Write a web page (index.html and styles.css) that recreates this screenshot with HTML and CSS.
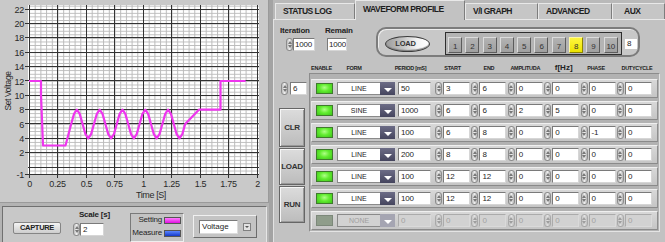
FILE: index.html
```
<!DOCTYPE html>
<html>
<head>
<meta charset="utf-8">
<link rel="stylesheet" href="styles.css">
</head>
<body>
<div class="app">
  <div class="left">
    <div class="graph">
      <svg class="plot" width="267" height="202" viewBox="0 0 267 202">
        <defs>
          <pattern id="minor" x="29" y="167" width="5.7" height="3.585" patternUnits="userSpaceOnUse">
            <path d="M0.5 0V3.585M0 0.5H5.7" stroke="#bababa" stroke-width="1" fill="none"/>
          </pattern>
        </defs>
        <rect x="28" y="5" width="231" height="170" fill="#ffffff"/>
        <rect x="29" y="5" width="230" height="170" fill="url(#minor)"/>
        <path stroke="#333333" stroke-width="1" fill="none" d="M29.5 5V175M57.5 5V175M86.5 5V175M114.5 5V175M143.5 5V175M171.5 5V175M200.5 5V175M228.5 5V175M257.5 5V175M28 9.5H259M28 23.5H259M28 37.5H259M28 52.5H259M28 66.5H259M28 80.5H259M28 95.5H259M28 109.5H259M28 123.5H259M28 138.5H259M28 152.5H259M28 167.5H259M28 174.5H259"/>
        <path stroke="#333333" stroke-width="1" fill="none" d="M25 9.5H29M25 23.5H29M25 37.5H29M25 52.5H29M25 66.5H29M25 80.5H29M25 95.5H29M25 109.5H29M25 123.5H29M25 138.5H29M25 152.5H29M25 174.5H29M29.5 175V178M57.5 175V178M86.5 175V178M114.5 175V178M143.5 175V178M171.5 175V178M200.5 175V178M228.5 175V178M257.5 175V178"/>
        <path stroke="#ee36ee" stroke-width="2.2" fill="none" stroke-linejoin="round" d="M29 81H41V95L43 145.5H65.5L71.18 124L74.03 113.86L76.88 109.64L79.73 113.86L82.58 124L85.43 134.14L88.28 138.32L91.13 134.14L93.98 124L96.83 113.86L99.68 109.64L102.53 113.86L105.38 124L108.23 134.14L111.08 138.32L113.93 134.14L116.78 124L119.63 113.86L122.48 109.64L125.33 113.86L128.18 124L131.03 134.14L133.88 138.32L136.73 134.14L139.58 124L142.43 113.86L145.28 109.64L148.13 113.86L150.98 124L153.83 134.14L156.68 138.32L159.53 134.14L162.38 124L165.23 113.86L168.08 109.64L170.93 113.86L173.78 124L176.63 134.14L179.48 138.32L182.33 134.14L185.18 124L198.9 109.64H220.5V81H245.6"/>
        <g class="ylab">
          <text x="24" y="12.8">22</text>
          <text x="24" y="27.1">20</text>
          <text x="24" y="41.4">18</text>
          <text x="24" y="55.8">16</text>
          <text x="24" y="70.1">14</text>
          <text x="24" y="84.5">12</text>
          <text x="24" y="98.8">10</text>
          <text x="24" y="113.1">8</text>
          <text x="24" y="127.5">6</text>
          <text x="24" y="141.8">4</text>
          <text x="24" y="156.2">2</text>
          <text x="24" y="177.7">-1</text>
        </g>
        <g class="xlab">
          <text x="29.5" y="187">0</text>
          <text x="57.5" y="187">0.25</text>
          <text x="86.5" y="187">0.5</text>
          <text x="114.5" y="187">0.75</text>
          <text x="143.5" y="187">1</text>
          <text x="171.5" y="187">1.25</text>
          <text x="200.5" y="187">1.5</text>
          <text x="228.5" y="187">1.75</text>
          <text x="257.5" y="187">2</text>
        </g>
        <text class="axt" x="151" y="197.5">Time [S]</text>
        <text class="axt vt" transform="translate(10.5 91) rotate(-90)">Set Voltage</text>
      </svg>
    </div>
    <div class="controls">
      <div class="capture">CAPTURE</div>
      <div class="scale">
        <div class="lbl right">Scale [s]</div>
        <div class="num"><i class="spin"></i><span class="box w24">2</span></div>
      </div>
      <div class="legend">
        <span class="ltxt">Setting</span><i class="sw mag"></i>
        <span class="ltxt">Measure</span><i class="sw blu"></i>
      </div>
      <div class="plotsel">
        <span class="field">Voltage</span>
        <i class="mini"></i>
      </div>
    </div>
  </div>
  <div class="divider"></div>
  <div class="right">
    <div class="tabs">
      <div class="tab tab-status">STATUS LOG</div>
      <div class="tab tab-wave on">WAVEFORM PROFILE</div>
      <div class="tab tab-vi">V/I GRAPH</div>
      <div class="tab tab-adv">ADVANCED</div>
      <div class="tab tab-aux">AUX</div>
    </div>
    <div class="body">
      <div class="toprow">
        <div class="iter">
          <div class="lbl">Iteration</div>
          <div class="num"><i class="spin"></i><span class="box w22">1000</span></div>
        </div>
        <div class="remain">
          <div class="lbl">Remain</div>
          <div class="num"><span class="box w20">1000</span></div>
        </div>
        <div class="loadgrp">
          <div class="oval">LOAD</div>
          <div class="nums">
            <div class="nb">1</div><div class="nb">2</div><div class="nb">3</div><div class="nb">4</div><div class="nb">5</div>
            <div class="nb">6</div><div class="nb">7</div><div class="nb sel">8</div><div class="nb">9</div><div class="nb">10</div>
          </div>
          <div class="ind">8</div>
        </div>
      </div>
      <div class="main">
        <div class="side">
          <div class="num"><i class="spin"></i><span class="box w17">6</span></div>
          <div class="sbtn first">CLR</div>
          <div class="sbtn">LOAD</div>
          <div class="sbtn">RUN</div>
        </div>
        <div class="table">
          <div class="hdr">
            <div class="h h-en">ENABLE</div>
            <div class="h h-form">FORM</div>
            <div class="h h-per">PERIOD [mS]</div>
            <div class="h h-pair h-first">START</div>
            <div class="h h-pair">END</div>
            <div class="h h-pair">AMPLITUDA</div>
            <div class="h h-pair h-f">f[Hz]</div>
            <div class="h h-pair h-ph">PHASE</div>
            <div class="h h-pair h-dc">DUTYCYCLE</div>
          </div>
          <div class="rows">
            <div class="row">
              <i class="led"></i>
              <div class="dd"><span class="ddv">LINE</span><i class="ddb"></i></div>
              <span class="box per">50</span>
              <div class="pair"><i class="spin"></i><span class="box">3</span></div>
              <div class="pair"><i class="spin"></i><span class="box">6</span></div>
              <div class="pair"><i class="spin"></i><span class="box">0</span></div>
              <div class="pair"><i class="spin"></i><span class="box">0</span></div>
              <div class="pair"><i class="spin"></i><span class="box">0</span></div>
              <div class="pair"><i class="spin"></i><span class="box">0</span></div>
            </div>
            <div class="row">
              <i class="led"></i>
              <div class="dd"><span class="ddv">SINE</span><i class="ddb"></i></div>
              <span class="box per">1000</span>
              <div class="pair"><i class="spin"></i><span class="box">6</span></div>
              <div class="pair"><i class="spin"></i><span class="box">6</span></div>
              <div class="pair"><i class="spin"></i><span class="box">2</span></div>
              <div class="pair"><i class="spin"></i><span class="box">5</span></div>
              <div class="pair"><i class="spin"></i><span class="box">0</span></div>
              <div class="pair"><i class="spin"></i><span class="box">0</span></div>
            </div>
            <div class="row">
              <i class="led"></i>
              <div class="dd"><span class="ddv">LINE</span><i class="ddb"></i></div>
              <span class="box per">100</span>
              <div class="pair"><i class="spin"></i><span class="box">6</span></div>
              <div class="pair"><i class="spin"></i><span class="box">8</span></div>
              <div class="pair"><i class="spin"></i><span class="box">0</span></div>
              <div class="pair"><i class="spin"></i><span class="box">0</span></div>
              <div class="pair"><i class="spin"></i><span class="box">-1</span></div>
              <div class="pair"><i class="spin"></i><span class="box">0</span></div>
            </div>
            <div class="row">
              <i class="led"></i>
              <div class="dd"><span class="ddv">LINE</span><i class="ddb"></i></div>
              <span class="box per">200</span>
              <div class="pair"><i class="spin"></i><span class="box">8</span></div>
              <div class="pair"><i class="spin"></i><span class="box">8</span></div>
              <div class="pair"><i class="spin"></i><span class="box">0</span></div>
              <div class="pair"><i class="spin"></i><span class="box">0</span></div>
              <div class="pair"><i class="spin"></i><span class="box">0</span></div>
              <div class="pair"><i class="spin"></i><span class="box">0</span></div>
            </div>
            <div class="row">
              <i class="led"></i>
              <div class="dd"><span class="ddv">LINE</span><i class="ddb"></i></div>
              <span class="box per">100</span>
              <div class="pair"><i class="spin"></i><span class="box">12</span></div>
              <div class="pair"><i class="spin"></i><span class="box">12</span></div>
              <div class="pair"><i class="spin"></i><span class="box">0</span></div>
              <div class="pair"><i class="spin"></i><span class="box">0</span></div>
              <div class="pair"><i class="spin"></i><span class="box">0</span></div>
              <div class="pair"><i class="spin"></i><span class="box">0</span></div>
            </div>
            <div class="row">
              <i class="led"></i>
              <div class="dd"><span class="ddv">LINE</span><i class="ddb"></i></div>
              <span class="box per">100</span>
              <div class="pair"><i class="spin"></i><span class="box">12</span></div>
              <div class="pair"><i class="spin"></i><span class="box">12</span></div>
              <div class="pair"><i class="spin"></i><span class="box">0</span></div>
              <div class="pair"><i class="spin"></i><span class="box">0</span></div>
              <div class="pair"><i class="spin"></i><span class="box">0</span></div>
              <div class="pair"><i class="spin"></i><span class="box">0</span></div>
            </div>
            <div class="row off">
              <i class="led"></i>
              <div class="dd"><span class="ddv">NONE</span><i class="ddb"></i></div>
              <span class="box per">0</span>
              <div class="pair"><i class="spin"></i><span class="box">0</span></div>
              <div class="pair"><i class="spin"></i><span class="box">0</span></div>
              <div class="pair"><i class="spin"></i><span class="box">0</span></div>
              <div class="pair"><i class="spin"></i><span class="box">0</span></div>
              <div class="pair"><i class="spin"></i><span class="box">0</span></div>
              <div class="pair"><i class="spin"></i><span class="box">0</span></div>
            </div>
          </div>
        </div>
      </div>
    </div>
  </div>
</div>
</body>
</html>
```
FILE: styles.css
```
* { box-sizing: border-box; margin: 0; padding: 0; }
html, body { width: 665px; height: 242px; overflow: hidden; }
body {
  background: #b7b7b7;
  font-family: "Liberation Sans", Arial, sans-serif;
  font-size: 8px;
  color: #262626;
}
i { display: block; font-style: normal; }
.app { display: flex; height: 242px; }

/* ---------- left side ---------- */
.left { width: 269px; display: flex; flex-direction: column; background: #b3b3b3; }
.graph { height: 203px; background: #c9c9c9; border-right: 1px solid #9a9a9a; border-bottom: 1px solid #9a9a9a; }
.plot { display: block; }
.ylab text { font-size: 9px; letter-spacing: -0.3px; text-anchor: end; fill: #2a2a2a; }
.xlab text { font-size: 9px; letter-spacing: -0.3px; text-anchor: middle; fill: #2a2a2a; }
.axt { font-size: 9px; letter-spacing: -0.4px; text-anchor: middle; fill: #2a2a2a; }
.axt.vt { font-size: 8.5px; letter-spacing: -0.4px; }

.controls {
  flex: 1;
  margin: 3px 2px 0;
  background: #c8c8c8;
  border-top: 1px solid #707070;
  border-left: 1px solid #707070;
  border-right: 1px solid #e6e6e6;
  display: flex;
  align-items: flex-start;
}
.capture {
  margin: 15px 0 0 10px;
  width: 48px; height: 12px;
  background: linear-gradient(#f4f4f4, #cdcdcd);
  border: 1px solid #858585;
  border-radius: 2px;
  font-weight: bold; font-size: 7.5px; letter-spacing: -0.3px; line-height: 10px;
  text-align: center; color: #222;
}
.scale { margin: 3px 0 0 11px; width: 38px; }
.lbl { font-weight: bold; font-size: 8px; letter-spacing: -0.2px; line-height: 10px; white-space: nowrap; color: #222; }
.lbl.right { text-align: right; }
.num { display: flex; }
.scale .num { margin-top: 3px; padding-left: 1px; }

.legend {
  margin: 6px 0 0 20px;
  width: 54px; height: 29px;
  border: 1px solid;
  border-color: #7a7a7a #eeeeee #eeeeee #7a7a7a;
  background: #c3c3c3;
  padding: 1px 2px 0 0;
  display: grid;
  grid-template-columns: 1fr 17px;
  grid-template-rows: 10px 10px;
  row-gap: 3px;
  align-items: center;
}
.ltxt { text-align: right; padding-right: 2px; font-size: 8px; letter-spacing: -0.2px; line-height: 10px; }
.sw { width: 17px; height: 7px; border: 1px solid #555; }
.sw.mag { background: linear-gradient(#ff7cff, #e010e0); }
.sw.blu { background: linear-gradient(#5a86ff, #1538c8); }

.plotsel {
  margin: 8px 0 0 9px;
  width: 64px; height: 23px;
  border: 1px solid;
  border-color: #f0f0f0 #6c6c6c #6c6c6c #f0f0f0;
  background: #c4c4c4;
  display: flex;
  align-items: flex-start;
}
.field {
  margin: 4px 0 0 5px;
  width: 39px; height: 14px;
  background: #fff;
  border: 1px solid;
  border-color: #7a7a7a #dcdcdc #dcdcdc #7a7a7a;
  font-size: 8px; line-height: 12px; padding-left: 2px;
}
.mini {
  margin: 7px 0 0 5px;
  width: 8px; height: 8px;
  background: #e2e2e2;
  border: 1px solid #808080;
  position: relative;
}
.mini::after {
  content: ""; position: absolute; left: 1px; top: 2px;
  border-left: 2px solid transparent; border-right: 2px solid transparent;
  border-top: 2px solid #555;
}

/* ---------- right side ---------- */
.divider { width: 4px; background: #a3a3a3; }
.right { flex: 1; display: flex; flex-direction: column; }
.tabs { height: 19px; display: flex; align-items: flex-end; padding-left: 2px; background: #b9b9b9; }
.tab {
  height: 16px;
  background: #c6c6c6;
  border-top: 1px solid #e8e8e8;
  border-left: 1px solid #e8e8e8;
  border-right: 1px solid #7d7d7d;
  font-weight: bold; font-size: 8.5px; letter-spacing: -0.5px; line-height: 15px;
  padding-left: 7px; white-space: nowrap; color: #1e1e1e;
}
.tab.on { height: 20px; margin-bottom: -1px; position: relative; background: #c2c2c2; line-height: 17px; }
.tab-status { width: 80px; }
.tab-wave { width: 110px; }
.tab-vi { width: 73px; }
.tab-adv { width: 74px; }
.tab-aux { flex: 1; padding-left: 11px; }

.body {
  flex: 1;
  background: #c2c2c2;
  border-top: 1px solid #e8e8e8;
  border-left: 1px solid #e2e2e2;
  padding-left: 5px;
  display: flex; flex-direction: column;
}
.toprow { height: 42px; display: flex; align-items: flex-start; }
.iter { margin: 6px 0 0 1px; width: 36px; }
.iter .num { margin: 2px 0 0 6px; }
.remain { margin: 6px 0 0 9px; width: 27px; }
.remain .num { margin: 2px 0 0 2px; }

.loadgrp {
  margin: 7px 0 0 24px;
  width: 264px; height: 30px;
  border: 2px solid #7c7c7c;
  border-radius: 10px;
  background: #c8c8c8;
  box-shadow: inset 1px 1px 0 #ececec;
  display: flex; align-items: flex-start;
  padding-left: 7px;
}
.oval {
  margin-top: 7px;
  width: 45px; height: 16px;
  border-radius: 50%;
  border: 1px solid #3c3c3c;
  background: linear-gradient(90deg, #9c9c9c, #c6c6c6 40%, #f4f4f4 72%, #ffffff);
  box-shadow: inset 0 -1px 1px #808080;
  font-weight: bold; font-size: 7.5px; letter-spacing: -0.2px; line-height: 14px;
  text-align: center; padding-right: 4px; color: #333;
}
.nums {
  margin: 3px 0 0 15px;
  width: 177px; height: 23px;
  border: 1px solid #2e2e2e;
  background: #b4b4b4;
  display: flex; gap: 3.3px;
  padding: 4px 0 0 2px;
}
.nb {
  width: 14px; height: 16px;
  background: linear-gradient(#b3b3b3, #9f9f9f);
  border: 1px solid;
  border-color: #dcdcdc #5c5c5c #5c5c5c #dcdcdc;
  font-size: 8px; letter-spacing: -0.3px; line-height: 15px; padding-top: 1px;
  text-align: center; color: #333;
}
.nb.sel { background: linear-gradient(#fff640, #ece400); border-color: #fffaa0 #8c8400 #8c8400 #fffaa0; }
.ind {
  margin: 10px 0 0 3px;
  width: 12px; height: 10px;
  background: #fff;
  font-size: 8px; line-height: 10px; padding-left: 2px;
}

.main { display: flex; flex: 1; }
.side { width: 28px; padding-top: 20px; display: flex; flex-direction: column; }
.side .num { margin-left: 2px; }
.side .num .box { margin-left: 2px; }
.sbtn {
  width: 26px; height: 37px; margin-top: 1px;
  display: flex; align-items: center; justify-content: center;
  background: linear-gradient(#dcdcdc, #bcbcbc);
  border: 1px solid #666;
  box-shadow: inset 1px 1px 0 #f6f6f6, inset -1px -1px 0 #999;
  font-weight: bold; font-size: 8px; letter-spacing: -0.3px; color: #333;
}
.sbtn.first { margin-top: 13px; height: 39px; }

.table { margin-left: 2px; width: 351px; }
.hdr { height: 11px; display: flex; align-items: center; padding-left: 7px; }
.h { display: flex; justify-content: center; white-space: nowrap; font-weight: bold; font-size: 5.5px; letter-spacing: -0.3px; color: #222; }
.h-en { width: 17px; padding-right: 6px; }
.h-form { width: 58px; margin-left: 4px; padding-right: 24px; }
.h-per { width: 33px; margin-left: 3px; padding-right: 8px; }
.h-pair { width: 35px; margin-left: 1.4px; }
.h-first { margin-left: 4px; }
.h-f { padding-left: 4px; font-size: 8px; letter-spacing: 0; }
.h-ph { padding-right: 4px; }
.h-dc { padding-left: 5px; }

.rows {
  border: 1px solid;
  border-color: #8c8c8c #e4e4e4 #e4e4e4 #8c8c8c;
  background: #b2b2b2;
  padding: 5px 1px 1px;
  display: flex; flex-direction: column; gap: 3px;
}
.row {
  height: 19px;
  display: flex; align-items: center;
  padding-left: 4px;
  background: linear-gradient(#d8d8d8, #c5c5c5);
  border: 1px solid;
  border-color: #efefef #8e8e8e #8a8a8a #e6e6e6;
}
.led {
  width: 17px; height: 11px;
  border: 1px solid #3f7a2c;
  background: radial-gradient(ellipse at 50% 40%, #b0ff88 0%, #62ec30 45%, #3cc41a 100%);
}
.dd { display: flex; margin-left: 4px; height: 13px; }
.ddv {
  width: 43px; height: 13px;
  background: #fff;
  border: 1px solid #8a8a8a; border-right: 0;
  text-align: center; font-size: 7px; line-height: 11px;
}
.ddb {
  width: 15px; height: 13px;
  background: linear-gradient(#6c6c86, #45455e);
  display: flex; align-items: center; justify-content: center;
}
.ddb::after {
  content: ""; margin-top: 2px;
  border-left: 4px solid transparent; border-right: 4px solid transparent;
  border-top: 4px solid #fff;
}
.per { margin-left: 3px; width: 33px; }
.pair { display: flex; width: 35px; margin-left: 1.4px; }
.per + .pair { margin-left: 4px; }
.pair .spin { margin-right: 1px; }

.box {
  display: block; flex: none;
  height: 13px; width: 27px;
  background: #fff;
  border: 1px solid;
  border-color: #7a7a7a #d6d6d6 #d6d6d6 #7a7a7a;
  font-size: 8px; letter-spacing: -0.2px; line-height: 11px;
  padding-left: 2px; white-space: nowrap; overflow: hidden;
}
.box.w24 { width: 24px; }
.box.w22 { width: 22px; padding-left: 1px; }
.box.w20 { width: 20px; padding-left: 1px; }
.box.w17 { width: 17px; }
.box.per { width: 33px; }

.spin {
  flex: none;
  width: 7px; height: 13px;
  border-radius: 3px;
  border: 1px solid #8c8c8c;
  background: linear-gradient(90deg, #bcbcbc, #eeeeee 50%, #b4b4b4);
  position: relative;
}
.spin::before, .spin::after {
  content: ""; position: absolute; left: 0.5px;
  border-left: 2px solid transparent; border-right: 2px solid transparent;
}
.spin::before { top: 2px; border-bottom: 3px solid #777; }
.spin::after { bottom: 2px; border-top: 3px solid #777; }

.off .led { background: #8f9d8b; border-color: #7c887a; }
.off .ddv { background: #d2d2d2; color: #a0a0a0; }
.off .ddb { background: #a5a5b2; }
.off .box { background: #d2d2d2; color: #a2a2a2; border-color: #ababab #dadada #dadada #ababab; }
.off .spin { opacity: 0.55; }
```
